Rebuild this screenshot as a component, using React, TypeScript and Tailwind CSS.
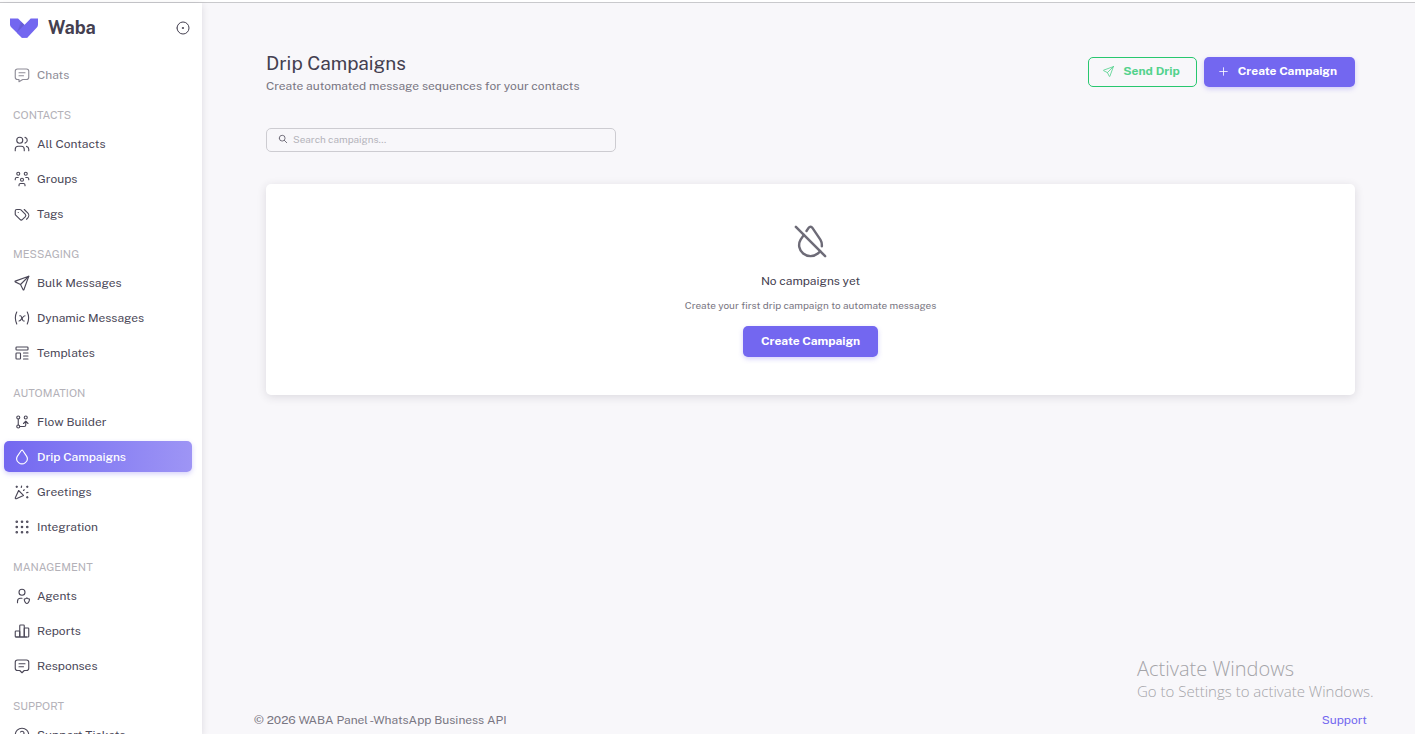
import { useState } from "react";
import type { IconType } from "react-icons";
import {
  TbChartBar,
  TbCircleDot,
  TbConfetti,
  TbDroplet,
  TbDropletOff,
  TbGitBranch,
  TbGridDots,
  TbHelp,
  TbMessage,
  TbMessage2,
  TbPlus,
  TbSearch,
  TbSend,
  TbTags,
  TbTemplate,
  TbUserShield,
  TbUsers,
  TbUsersGroup,
  TbVariable,
} from "react-icons/tb";

interface NavItem {
  label: string;
  icon: IconType;
}

interface NavSection {
  title: string;
  items: NavItem[];
}

const sections: NavSection[] = [
  {
    title: "CONTACTS",
    items: [
      { label: "All Contacts", icon: TbUsers },
      { label: "Groups", icon: TbUsersGroup },
      { label: "Tags", icon: TbTags },
    ],
  },
  {
    title: "MESSAGING",
    items: [
      { label: "Bulk Messages", icon: TbSend },
      { label: "Dynamic Messages", icon: TbVariable },
      { label: "Templates", icon: TbTemplate },
    ],
  },
  {
    title: "AUTOMATION",
    items: [
      { label: "Flow Builder", icon: TbGitBranch },
      { label: "Drip Campaigns", icon: TbDroplet },
      { label: "Greetings", icon: TbConfetti },
      { label: "Integration", icon: TbGridDots },
    ],
  },
  {
    title: "MANAGEMENT",
    items: [
      { label: "Agents", icon: TbUserShield },
      { label: "Reports", icon: TbChartBar },
      { label: "Responses", icon: TbMessage2 },
    ],
  },
  {
    title: "SUPPORT",
    items: [{ label: "Support Tickets", icon: TbHelp }],
  },
];

const Logo = () => (
  <svg viewBox="0 0 32 22" className="h-5 w-7" aria-hidden="true">
    <path
      fill="#7367f0"
      d="M0 0V6.85C0 6.85 -.13 9.01 1.98 10.84L13.69 22L19.78 21.92L18.8 9.88L16.5 7.17L9.24 0Z"
    />
    <path fill="#161616" opacity="0.06" d="M7.7 16.44L12.52 3.24L16.55 7.26Z" />
    <path fill="#161616" opacity="0.06" d="M8.08 15.92L13.94 4.64L16.58 7.28Z" />
    <path
      fill="#7367f0"
      d="M7.77 16.36L23.66 0H32V6.88C32 6.88 31.83 9.18 30.66 10.41L19.78 22H13.69Z"
    />
  </svg>
);

const NavLink = ({ item, active, muted, onSelect }: { item: NavItem; active?: boolean; muted?: boolean; onSelect: () => void }) => {
  const Icon = item.icon;
  const tone = active
    ? "bg-linear-to-r from-[#7367f0] to-[#9e95f5] text-white font-medium shadow-[0_2px_5px_rgba(115,103,240,0.3)]"
    : muted
      ? "text-[#8e8c97]"
      : "text-[#4b4858]";

  return (
    <a
      href="#"
      onClick={(e) => {
        e.preventDefault();
        onSelect();
      }}
      className={`flex h-[31px] shrink-0 items-center gap-[6px] rounded-[5px] pl-[9px] text-xs ${tone}`}
    >
      <Icon className="size-[18px] stroke-[1.5]" />
      {item.label}
    </a>
  );
};

const App = () => {
  const [current, setCurrent] = useState("Drip Campaigns");
  const [search, setSearch] = useState("");

  return (
    <div className="flex h-screen flex-col overflow-hidden bg-[#f8f7fa] font-['Public_Sans',Inter,sans-serif] text-[#444050]">
      <div className="h-[3px] shrink-0 border-b border-[#c9c9cc] bg-white" />

      <div className="flex min-h-0 flex-1">
        {/* Sidebar */}
        <aside className="flex w-[202px] shrink-0 flex-col overflow-hidden bg-white shadow-[0_2px_7px_rgba(47,43,61,0.14)]">
          <div className="flex h-[50px] shrink-0 items-center pr-[11px] pl-[10px]">
            <Logo />
            <span className="ml-[10px] text-lg font-bold">Waba</span>
            <button type="button" aria-label="Toggle menu" className="ml-auto text-[#444050]">
              <TbCircleDot className="size-4 stroke-[1.5]" />
            </button>
          </div>

          <nav className="flex flex-col gap-1 pt-[6px] pr-[10px] pl-1">
            <NavLink item={{ label: "Chats", icon: TbMessage }} muted onSelect={() => setCurrent("Chats")} />
            {sections.map((section) => (
              <div key={section.title} className="flex flex-col gap-1">
                <h2 className="h-[30px] pt-[13px] pl-[9px] text-[11px] leading-4 text-[#b3b1b8]">{section.title}</h2>
                {section.items.map((item) => (
                  <NavLink
                    key={item.label}
                    item={item}
                    active={item.label === current}
                    onSelect={() => setCurrent(item.label)}
                  />
                ))}
              </div>
            ))}
          </nav>
        </aside>

        {/* Page */}
        <div className="flex min-w-0 flex-1 flex-col pr-12 pl-[52px]">
          <main className="flex-1 px-3 pt-12">
            <header className="flex items-start justify-between">
              <div>
                <h1 className="text-[19px] leading-6">Drip Campaigns</h1>
                <p className="text-xs leading-[22px] text-[#797682]">
                  Create automated message sequences for your contacts
                </p>
              </div>
              <div className="flex gap-[7px] pt-[6px]">
                <button
                  type="button"
                  className="flex h-[30px] items-center gap-2 rounded-[5px] border border-[#28c76f] pr-4 pb-[2px] pl-[13px] text-xs font-bold text-[#53d28c]"
                >
                  <TbSend className="size-[13px] stroke-[1.5]" />
                  Send Drip
                </button>
                <button
                  type="button"
                  className="flex h-[30px] items-center gap-2 rounded-[5px] bg-[#7367f0] pr-[18px] pb-[2px] pl-[13px] text-xs font-bold text-white shadow-[0_2px_5px_rgba(115,103,240,0.3)]"
                >
                  <TbPlus className="size-[13px] stroke-[1.5]" />
                  Create Campaign
                </button>
              </div>
            </header>

            <label className="mt-[31px] flex h-6 w-[350px] items-center gap-[5px] rounded-[5px] border border-[#cdccd1] pb-[2px] pl-[11px]">
              <TbSearch className="size-[10px] text-[#5f5c69]" />
              <input
                type="text"
                aria-label="Search campaigns"
                placeholder="Search campaigns..."
                value={search}
                onChange={(e) => setSearch(e.target.value)}
                className="min-w-0 flex-1 bg-transparent text-[10px] outline-none placeholder:text-[#b5b4ba]"
              />
            </label>

            {/* Empty state */}
            <section className="mt-8 flex flex-col items-center rounded-[5px] bg-white py-[38px] shadow-[0_2px_10px_rgba(47,43,61,0.14)]">
              <TbDropletOff className="size-[39px] stroke-[1.5] text-[#6d6b77]" />
              <h2 className="mt-[11px] text-xs leading-[18px]">No campaigns yet</h2>
              <p className="mt-[7px] text-[10px] leading-4 text-[#797682]">
                Create your first drip campaign to automate messages
              </p>
              <button
                type="button"
                className="mt-[13px] h-[31px] rounded-[5px] bg-[#7367f0] px-[18px] pb-[2px] text-xs font-bold text-white shadow-[0_2px_5px_rgba(115,103,240,0.3)]"
              >
                Create Campaign
              </button>
            </section>
          </main>

          <footer className="flex items-center justify-between pb-[5px] text-xs leading-[18px] text-[#797682]">
            <span>© 2026 WABA Panel -WhatsApp Business API</span>
            <a href="#" className="text-[#7367f0]">
              Support
            </a>
          </footer>
        </div>
      </div>

      <div className="pointer-events-none absolute right-[42px] bottom-[33px] w-[236px] font-['Segoe_UI','Open_Sans',sans-serif] font-light whitespace-nowrap text-[#a4a4a8]">
        <p className="text-xl leading-6">Activate Windows</p>
        <p className="text-[15px] leading-5">Go to Settings to activate Windows.</p>
      </div>
    </div>
  );
};

export default App;
